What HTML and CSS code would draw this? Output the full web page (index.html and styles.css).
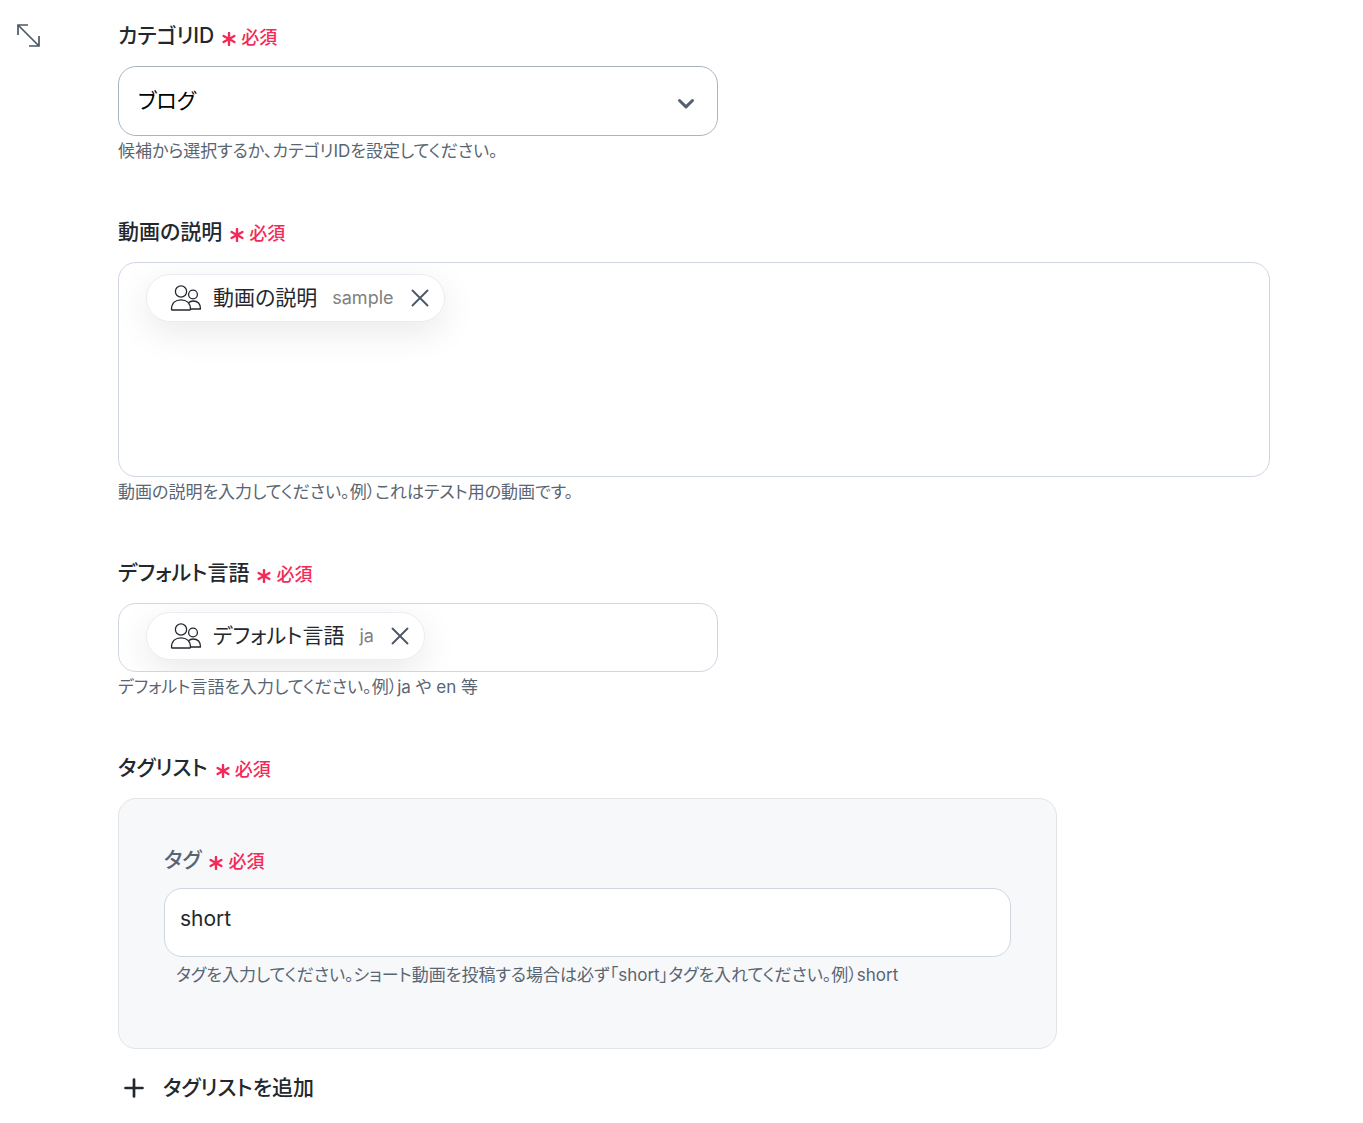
FILE: index.html
```html
<!DOCTYPE html>
<html lang="ja">
<head>
<meta charset="utf-8">
<meta name="viewport" content="width=device-width, initial-scale=1">
<title>動画の設定</title>
<link rel="stylesheet" href="styles.css">
</head>
<body>
<svg class="sprite" aria-hidden="true">
  <symbol id="asterisk" viewBox="0 0 14 14"><path d="M7 1v12M1.6 4l10.8 6M12.4 4L1.6 10" fill="none" stroke="currentColor" stroke-width="2.4" stroke-linecap="round"/></symbol>
  <symbol id="people" viewBox="0 0 32 28"><g fill="none" stroke="currentColor" stroke-width="1.3" stroke-linejoin="round"><circle cx="11" cy="7.5" r="5.6"/><path d="M1.500 25.500C1.500 19 5.500 15.800 11 15.800S20.500 19 20.500 25.500Q20.500 26 20 26H2Q1.500 26 1.500 25.500Z"/><circle cx="23" cy="10.500" r="4.400"/><path d="M18.500 18.800C20 17.500 21.500 17 23 17C27.500 17 30.500 19.800 30.500 25H20.500"/></g></symbol>
  <symbol id="close" viewBox="0 0 18 18"><path d="M1.500 1.500l15 15M16.500 1.500l-15 15" fill="none" stroke="currentColor" stroke-width="1.900" stroke-linecap="round"/></symbol>
</svg>
<main class="page">
  <button class="expand" type="button" aria-label="拡大">
    <svg width="24" height="24" viewBox="0 0 24 24" aria-hidden="true"><path d="M1 11V1h10M1 1l21 21M22 12v10h-10" fill="none" stroke="currentColor" stroke-width="1.700"/></svg>
  </button>
  <form class="form">
    <div class="field">
      <div class="heading"><label class="label" for="category">カテゴリID</label><span class="required"><svg class="mark" aria-hidden="true"><use href="#asterisk"/></svg>必須</span></div>
      <div class="select half">
        <select id="category"><option>ブログ</option></select>
        <svg class="chevron" width="18" height="12" viewBox="0 0 18 12" aria-hidden="true"><path d="M2.500 2.500L9 8.800l6.500-6.300" fill="none" stroke="currentColor" stroke-width="3" stroke-linecap="round" stroke-linejoin="round"/></svg>
      </div>
      <p class="help">候補から選択するか、カテゴリIDを設定してください。</p>
    </div>

    <div class="field">
      <div class="heading"><span class="label" id="description">動画の説明</span><span class="required"><svg class="mark" aria-hidden="true"><use href="#asterisk"/></svg>必須</span></div>
      <div class="box area" role="group" aria-labelledby="description">
        <span class="chip"><svg class="people" aria-hidden="true"><use href="#people"/></svg><span class="name">動画の説明</span><span class="value">sample</span><button class="remove" type="button" aria-label="削除"><svg aria-hidden="true"><use href="#close"/></svg></button></span>
      </div>
      <p class="help">動画の説明を入力してください。例）これはテスト用の動画です。</p>
    </div>

    <div class="field">
      <div class="heading"><span class="label" id="language">デフォルト言語</span><span class="required"><svg class="mark" aria-hidden="true"><use href="#asterisk"/></svg>必須</span></div>
      <div class="box half" role="group" aria-labelledby="language">
        <span class="chip"><svg class="people" aria-hidden="true"><use href="#people"/></svg><span class="name">デフォルト言語</span><span class="value">ja</span><button class="remove" type="button" aria-label="削除"><svg aria-hidden="true"><use href="#close"/></svg></button></span>
      </div>
      <p class="help">デフォルト言語を入力してください。例）ja や en 等</p>
    </div>

    <div class="field">
      <div class="heading"><span class="label">タグリスト</span><span class="required"><svg class="mark" aria-hidden="true"><use href="#asterisk"/></svg>必須</span></div>
      <div class="panel">
        <div class="heading"><label class="label" for="tag">タグ</label><span class="required"><svg class="mark" aria-hidden="true"><use href="#asterisk"/></svg>必須</span></div>
        <input class="text" id="tag" type="text" value="short">
        <p class="help">タグを入力してください。ショート動画を投稿する場合は必ず「short」タグを入れてください。例）short</p>
      </div>
      <button class="add" type="button"><svg width="20" height="20" viewBox="0 0 20 20" aria-hidden="true"><path d="M10 1.500v17M1.500 10h17" fill="none" stroke="currentColor" stroke-width="2.700" stroke-linecap="round"/></svg>タグリストを追加</button>
    </div>
  </form>
</main>
</body>
</html>
```
FILE: styles.css
```css
* { box-sizing: border-box; }
body {
  margin: 0;
  background: #fff;
  color: #23282e;
  font-family: Inter, "Noto Sans CJK JP", sans-serif;
  font-size: 21px;
  line-height: 30px;
  font-feature-settings: "palt";
}
button, input, select { font: inherit; font-feature-settings: inherit; color: inherit; }
button { padding: 0; border: 0; background: none; cursor: pointer; }
svg { display: block; flex: none; }
.sprite { display: none; }

.page {
  display: grid;
  grid-template-columns: 102px minmax(0, 1fr);
  padding: 20px 93px 10px 16px;
}
.expand { justify-self: start; align-self: start; padding: 4px 0 0 1px; color: #4d5866; }
.form, .field { display: flex; flex-direction: column; }
.form { gap: 50px; }

.heading { display: flex; align-items: center; gap: 8px; padding-top: 1px; margin-bottom: 15px; }
.label { font-weight: 500; }
.required {
  display: flex;
  align-items: center;
  gap: 5px;
  padding-top: 3px;
  color: #f22a58;
  font-size: 18px;
  font-weight: 500;
  line-height: 27px;
}
.mark { width: 14px; height: 14px; margin-top: 3px; }
.help { margin: 0; color: #5a6572; font-size: 17px; }

.half { width: 100%; max-width: 600px; }
.select { display: grid; align-items: center; }
.select select, .chevron { grid-area: 1 / 1; }
.select select {
  width: 100%;
  height: 70px;
  padding: 0 60px 0 19px;
  border: 1px solid #abb5c1;
  border-radius: 18px;
  background: #fff;
  color: #000;
  appearance: none;
}
.chevron { justify-self: end; margin: 6px 23px 0 0; color: #565f6d; pointer-events: none; }

.box {
  display: flex;
  align-items: flex-start;
  min-height: 69px;
  padding: 8px 27px;
  border: 1px solid #d0d6df;
  border-radius: 18px;
  overflow: hidden;
}
.area { min-height: 215px; padding-top: 11px; }
.chip {
  display: flex;
  align-items: center;
  height: 48px;
  padding: 0 15px 0 23px;
  border: 1px solid #e9ecf2;
  border-radius: 24px;
  background: #fff;
  box-shadow: 0 10px 36px rgba(0, 0, 0, 0.09);
}
.people { width: 32px; height: 28px; margin-right: 11px; }
.value { margin-left: 15px; color: #808080; font-size: 18px; }
.remove { margin-left: 17px; color: #4d5866; }
.remove svg { width: 18px; height: 18px; }

.panel {
  max-width: 939px;
  padding: 45px 45px 58px;
  border: 1px solid #e2e4e7;
  border-radius: 18px;
  background: #f7f8fa;
}
.panel .heading { margin-bottom: 13px; }
.panel .label { color: #5a6572; }
.panel .help { margin: 3px 0 0 12px; }
.text {
  display: block;
  width: 100%;
  height: 69px;
  padding: 0 15px 8px;
  border: 1px solid #d0d6df;
  border-radius: 18px;
  background: #fff;
}
.add {
  display: flex;
  align-items: center;
  align-self: flex-start;
  gap: 19px;
  margin-top: 24px;
  padding-left: 6px;
  font-weight: 500;
}
```
